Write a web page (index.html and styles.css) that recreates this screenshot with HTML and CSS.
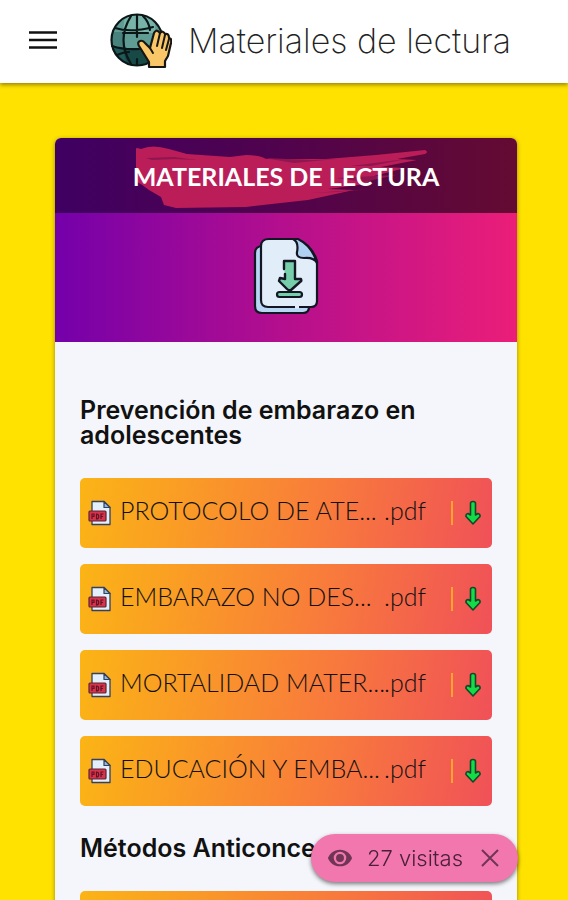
FILE: index.html
```html
<!DOCTYPE html>
<html lang="es">
<head>
    <meta charset="UTF-8">
    <meta name="viewport" content="width=device-width, initial-scale=1.0">
    <title>Materiales de lectura</title>
    <link rel="stylesheet" href="styles.css">
</head>
<body>

    <!-- shared icons -->
    <svg class="sprite" aria-hidden="true">
        <symbol id="icon-pdf" viewBox="0 0 24 26">
            <path d="M4 1.5h12l6 6v17H4z" fill="#e3effb" stroke="#34405c" stroke-width="1.3" stroke-linejoin="round"/>
            <path d="M16 1.5v6h6z" fill="#8fb9e0" stroke="#34405c" stroke-width="1.2" stroke-linejoin="round"/>
            <rect x="1" y="11" width="17" height="10" rx="1" fill="#d93349" stroke="#5a2433" stroke-width="1.2"/>
            <path d="M4 19v-5h2v2.5H4M8.500 14v5c3 0 3-5 0-5zM13 19v-5h2.500M13 16.500h2" fill="none" stroke="#5c1428" stroke-width="1.2"/>
        </symbol>
        <symbol id="icon-down" viewBox="0 0 18 26">
            <path d="M9 1.500q2.500 0 2.500 2V15l2.500-1.500q2.500.500 2 3L9 24 2 16.500q-.500-2.500 2-3L6.500 15V3.500q0-2 2.500-2z" fill="#14dc46" stroke="#14472a" stroke-width="1.6" stroke-linejoin="round"/>
        </symbol>
    </svg>

    <header class="topbar">
        <button class="menu-btn" type="button" aria-label="Menú">
            <svg width="28" height="20" viewBox="0 0 28 20" aria-hidden="true">
                <path d="M0 1.500h28M0 9h28M0 16.500h28" stroke="#111" stroke-width="2.600"/>
            </svg>
        </button>
        <svg class="logo" viewBox="0 0 62 56" aria-hidden="true">
            <defs>
                <clipPath id="globe"><circle cx="27" cy="27" r="25"/></clipPath>
            </defs>
            <g clip-path="url(#globe)">
                <path d="M0 0h54v54H0z" fill="#5f9c94"/>
                <path d="M15 0h30v20H13z" fill="#78b3a9"/>
                <path d="M0 19h13v16H0z" fill="#47827d"/>
                <path d="M0 34q27 5 54 0v20H0z" fill="#215a58"/>
                <path d="M13 36h28v20H18z" fill="#174946"/>
            </g>
            <g fill="none" stroke="#0b1717" stroke-width="2.200" stroke-linecap="round">
                <circle cx="27" cy="27" r="25.500"/>
                <path d="M27 2v22M27 46v6M21 3Q6 27 21 51M33 3q6 6 7 14M5 15q16 5 38-1M2 33q12 4 27 3M13 20h25M7 42q7-3 12-3"/>
            </g>
            <path d="M39 54v-5L29 33q-2-4 1-5 3-1 5 2l5 5 4-15q2-4 5-1l1 1q3-3 5 1 4-1 4 4 3 0 2 5l-3 13-3 5v6z" fill="#fac768" stroke="#171613" stroke-width="2.200" stroke-linejoin="round"/>
            <path d="M50 20l-3 13M55 22l-3 13M59 26l-3 11M40 35l3 5" fill="none" stroke="#171613" stroke-width="2" stroke-linecap="round"/>
        </svg>
        <h1 class="title">Materiales de lectura</h1>
    </header>

    <main class="content">
        <article class="card">
            <div class="card-head">
                <svg class="brush" viewBox="0 0 300 64" preserveAspectRatio="none" aria-hidden="true">
                    <path d="M5 5Q16 0 33 5l18 5 43 3 16-2q14 0 20 4l60 0 50-4 49-5q4 2 0 4l-28 5 20 1-36 7 24 1-31 8-8 8-38 5 26 1-46 10-62 7-70 1-12-3-3-8-12-7q-10-8-18-11l10-6-9-3q-8-7-4-13l7-3q-5-2 2-6z" fill="#bb1d59"/>
                    <path d="M10 14l28-1 23 3-23-1-22 1M128 14l48 2 24-1-42 4zM215 22l55-7-35 7zM200 34l60-3-32 7zM175 49l61-4-36 3z" fill="#8f164f"/>
                </svg>
                <h2 class="card-title">MATERIALES DE LECTURA</h2>
            </div>
            <div class="card-banner">
                <svg width="66" height="78" viewBox="0 0 66 78" aria-hidden="true">
                    <path d="M10 9Q2 9 2 16v53q0 7 7 7h41q6 0 6-6V20z" fill="#b7d7f4" stroke="#131724" stroke-width="2.200"/>
                    <path d="M16 2h28q15 6 20 22v40q0 6-6 6H15q-7 0-7-7V9q0-7 8-7z" fill="#e1edf9" stroke="#131724" stroke-width="2.200"/>
                    <path d="M40 2q6 3 4 13-1 6 7 6 10-1 13 5Q59 9 45 2z" fill="#b0d1f2" stroke="#131724" stroke-width="2.200" stroke-linejoin="round"/>
                    <path d="M42 70h4" stroke="#e1edf9" stroke-width="3"/>
                    <path d="M31 32v-8h11v18h6q1 2-1 3l-9 8q-2 1-4-1l-8-8 1-3 5 1v-5" fill="#76cfaa" stroke="#131724" stroke-width="2.400" stroke-linejoin="round" stroke-linecap="round"/>
                    <rect x="24" y="55" width="25" height="5" rx="2.500" fill="#76cfaa" stroke="#131724" stroke-width="2.200"/>
                </svg>
            </div>

            <div class="card-body">
                <section class="group">
                    <h3 class="group-title">Prevención de embarazo en adolescentes</h3>
                    <a class="file" href="#">
                        <svg class="pdf" aria-hidden="true"><use href="#icon-pdf"/></svg>
                        <span class="name">PROTOCOLO DE ATE...</span>
                        <span class="ext">.pdf</span>
                        <span class="divider"></span>
                        <svg class="down" aria-hidden="true"><use href="#icon-down"/></svg>
                    </a>
                    <a class="file" href="#">
                        <svg class="pdf" aria-hidden="true"><use href="#icon-pdf"/></svg>
                        <span class="name">EMBARAZO NO DES...</span>
                        <span class="ext">.pdf</span>
                        <span class="divider"></span>
                        <svg class="down" aria-hidden="true"><use href="#icon-down"/></svg>
                    </a>
                    <a class="file" href="#">
                        <svg class="pdf" aria-hidden="true"><use href="#icon-pdf"/></svg>
                        <span class="name">MORTALIDAD MATER...</span>
                        <span class="ext">.pdf</span>
                        <span class="divider"></span>
                        <svg class="down" aria-hidden="true"><use href="#icon-down"/></svg>
                    </a>
                    <a class="file" href="#">
                        <svg class="pdf" aria-hidden="true"><use href="#icon-pdf"/></svg>
                        <span class="name">EDUCACIÓN Y EMBA...</span>
                        <span class="ext">.pdf</span>
                        <span class="divider"></span>
                        <svg class="down" aria-hidden="true"><use href="#icon-down"/></svg>
                    </a>
                </section>

                <section class="group">
                    <h3 class="group-title">Métodos Anticonceptivos</h3>
                    <div class="file"></div>
                </section>
            </div>
        </article>
    </main>

    <div class="visits">
        <svg class="eye" width="26" height="20" viewBox="0 0 28 20" aria-hidden="true">
            <path d="M14 1C7.500 1 3 5 1 10c2 5 6.500 9 13 9s11-4 13-9C25 5 20.500 1 14 1z" fill="#703455"/>
            <circle cx="14" cy="10" r="5.500" fill="none" stroke="#f177ae" stroke-width="2.500"/>
        </svg>
        <span class="visits-text">27 visitas</span>
        <button class="close-btn" type="button" aria-label="Cerrar">
            <svg width="18" height="18" viewBox="0 0 18 18" aria-hidden="true">
                <path d="M1 1l16 16M17 1L1 17" stroke="#703455" stroke-width="2"/>
            </svg>
        </button>
    </div>

</body>
</html>
```
FILE: styles.css
```css
* {
    box-sizing: border-box;
}
body {
    margin: 0;
    font-family: Lato, "Open Sans", sans-serif;
    background-color: #ffe200;
    color: #111;
}
h1, h2, h3 {
    margin: 0;
}
button {
    display: flex;
    padding: 0;
    border: none;
    background: none;
    cursor: pointer;
}
.sprite {
    display: none;
}
.topbar {
    display: flex;
    align-items: center;
    height: 83px;
    padding: 0 29px 2px;
    background: white;
    box-shadow: 0 2px 4px rgba(0, 0, 0, 0.4);
}
.logo {
    width: 62px;
    height: 56px;
    margin-left: 53px;
}
.title {
    margin-left: 16px;
    color: #222;
    font-family: Inter, sans-serif;
    font-size: 34px;
    font-weight: 200;
    line-height: 40px;
    white-space: nowrap;
}
.content {
    padding: 55px 51px 55px 55px;
}
.card {
    border-radius: 6px;
    overflow: hidden;
    background: #f4f6fb;
    box-shadow: 0 1px 4px rgba(0, 0, 0, 0.4);
}
.card-head {
    display: grid;
    place-items: center;
    height: 75px;
    background: linear-gradient(to right, #3f0062, #51034c 50%, #640b32);
}
.brush {
    grid-area: 1 / 1;
    width: 300px;
    height: 64px;
}
.card-title {
    grid-area: 1 / 1;
    z-index: 1;
    color: white;
    font-size: 25px;
    line-height: 32px;
}
.card-banner {
    display: flex;
    justify-content: center;
    align-items: center;
    height: 129px;
    padding-bottom: 4px;
    background: linear-gradient(to right, #7400aa, #b50f8d 50%, #eb1e79);
}
.card-body {
    padding: 56px 25px 25px;
}
.group {
    display: flex;
    flex-direction: column;
    gap: 16px;
    margin-bottom: 30px;
}
.group-title {
    margin-bottom: 14px;
    font-family: Inter, sans-serif;
    font-size: 25px;
    font-weight: 600;
    line-height: 25px;
}
.file {
    display: flex;
    align-items: center;
    height: 70px;
    padding: 0 10px 0 8px;
    border-radius: 5px;
    background: linear-gradient(100deg, #fbb415, #f87a3c 60%, #f05158);
    color: #111;
    font-size: 25px;
    font-weight: 300;
    line-height: 32px;
    text-decoration: none;
    white-space: nowrap;
}
.pdf {
    width: 24px;
    height: 26px;
    margin-right: 8px;
}
.name {
    flex: 1;
    min-width: 0;
}
.name, .ext {
    padding-bottom: 6px;
}
.ext {
    margin-right: 25px;
}
.divider {
    width: 2px;
    height: 24px;
    margin-right: 11px;
    background: #fba22f;
}
.down {
    width: 18px;
    height: 26px;
}
.visits {
    position: fixed;
    right: 50px;
    bottom: 18px;
    display: flex;
    align-items: center;
    height: 48px;
    padding: 0 19px 0 16px;
    border-radius: 24px;
    background: #f177ae;
    box-shadow: 0 2px 4px rgba(0, 0, 0, 0.5);
}
.visits-text {
    margin: 0 18px 0 14px;
    color: #4a2038;
    font-family: Inter, sans-serif;
    font-size: 22px;
    font-weight: 300;
    line-height: 28px;
}
```
